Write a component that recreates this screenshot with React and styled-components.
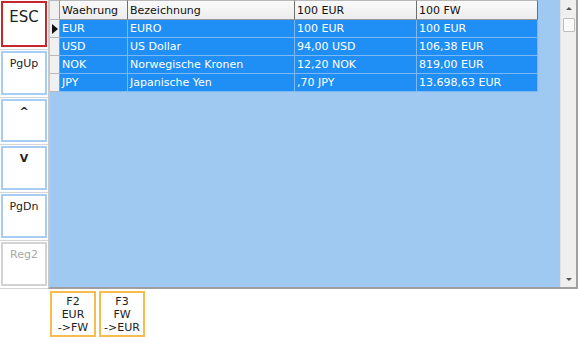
import React from 'react'
import styled, { createGlobalStyle } from 'styled-components'

const GlobalStyle = createGlobalStyle`
  html, body {
    margin: 0;
    padding: 0;
    background: #fff;
  }
  body {
    font-family: Tahoma, "DejaVu Sans", sans-serif;
    font-size: 11px;
    color: #1a1a1a;
  }
`

const Page = styled.div`
  width: 578px;
  height: 337px;
  overflow: hidden;
`

const Top = styled.div`
  display: flex;
  height: 289px;
`

const SideBar = styled.div`
  width: 49px;
  display: flex;
  flex-direction: column;
`

const SideSlot = styled.div`
  height: 48px;
  padding: 1px 1px 0 1px;
  border-bottom: 1px solid #d4d4d4;
  box-sizing: border-box;
  display: flex;
  &:first-child {
    height: 50px;
  }
`

const KeyButton = styled.div`
  flex: 1;
  margin-bottom: 2px;
  background: #fff;
  border: 2px solid ${p => (p.$tone === 'red' ? '#c8262c' : p.$tone === 'grey' ? '#d2d2d2' : '#a8cdf5')};
  color: ${p => (p.$tone === 'grey' ? '#a8a8a8' : '#222')};
  font-size: ${p => (p.$big ? '15px' : '11px')};
  font-weight: ${p => (p.$bold ? 'bold' : 'normal')};
  text-align: center;
  padding-top: ${p => (p.$big ? '5px' : '4px')};
  box-sizing: border-box;
`

const Grid = styled.div`
  flex: 1;
  display: flex;
  background: #9fc9f0;
  border-left: 2px solid #c8c8c8;
  border-right: 2px solid #a0a0a0;
  border-bottom: 2px solid #a0a0a0;
`

const Table = styled.div`
  flex: 1;
  display: flex;
  flex-direction: column;
`

const Row = styled.div`
  display: flex;
  height: ${p => (p.$head ? '20px' : '18px')};
`

const RowHead = styled.div`
  width: 9px;
  flex: none;
  background: #f0f0f0;
  border-right: 1px solid #9a9a9a;
  border-bottom: 1px solid #b8b8b8;
  border-top: ${p => (p.$head ? '1px solid #b8b8b8' : 'none')};
  display: flex;
  align-items: center;
  justify-content: center;
`

const Arrow = styled.span`
  width: 0;
  height: 0;
  border-top: 5px solid transparent;
  border-bottom: 5px solid transparent;
  border-left: 6px solid #111;
`

const HeadCell = styled.div`
  width: ${p => p.$w}px;
  flex: none;
  box-sizing: border-box;
  padding-left: 2px;
  background: linear-gradient(#fafafa, #ececec);
  border-top: 1px solid #b8b8b8;
  border-right: 1px solid #6f6f6f;
  border-bottom: 1px solid #9a9a9a;
  display: flex;
  align-items: center;
  color: #111;
  white-space: nowrap;
`

const Cell = styled.div`
  width: ${p => p.$w}px;
  flex: none;
  box-sizing: border-box;
  padding-left: 2px;
  background: #1f8ff5;
  color: #fff;
  border-right: 1px solid #7cb9f2;
  border-bottom: 1px solid #7cb9f2;
  display: flex;
  align-items: center;
  white-space: nowrap;
`

const ScrollBar = styled.div`
  width: 15px;
  margin-left: 22px;
  background: #efefef;
  border-left: 1px solid #e2e2e2;
  display: flex;
  flex-direction: column;
  align-items: center;
`

const ScrollArrow = styled.div`
  height: 16px;
  display: flex;
  align-items: center;
  justify-content: center;
  &::after {
    content: '';
    width: 0;
    height: 0;
    border-left: 3px solid transparent;
    border-right: 3px solid transparent;
    ${p => (p.$down ? 'border-top: 3px solid #555;' : 'border-bottom: 3px solid #555;')}
  }
`

const Thumb = styled.div`
  width: 10px;
  height: 12px;
  margin-top: 2px;
  background: #fbfbfb;
  border: 1px solid #bdbdbd;
  border-radius: 1px;
`

const Spacer = styled.div`
  flex: 1;
`

const Bottom = styled.div`
  display: flex;
  gap: 3px;
  padding: 2px 0 0 50px;
`

const FnButton = styled.div`
  width: 46px;
  height: 46px;
  box-sizing: border-box;
  border: 2px solid #f6bc4e;
  background: #fff;
  text-align: center;
  line-height: 13px;
  padding-top: 2px;
  color: #222;
`

const widths = [68, 167, 122, 121]
const headers = ['Waehrung', 'Bezeichnung', '100 EUR', '100 FW']
const rows = [
  ['EUR', 'EURO', '100 EUR', '100 EUR'],
  ['USD', 'US Dollar', '94,00 USD', '106,38 EUR'],
  ['NOK', 'Norwegische Kronen', '12,20 NOK', '819,00 EUR'],
  ['JPY', 'Japanische Yen', ',70 JPY', '13.698,63 EUR'],
]

const keys = [
  { label: 'ESC', tone: 'red', big: true },
  { label: 'PgUp' },
  { label: '^', bold: true },
  { label: 'V', bold: true },
  { label: 'PgDn' },
  { label: 'Reg2', tone: 'grey' },
]

export default function App() {
  return (
    <Page>
      <GlobalStyle />
      <Top>
        <SideBar>
          {keys.map(k => (
            <SideSlot key={k.label}>
              <KeyButton $tone={k.tone} $big={k.big} $bold={k.bold}>
                {k.label}
              </KeyButton>
            </SideSlot>
          ))}
        </SideBar>
        <Grid>
          <Table>
            <Row $head>
              <RowHead $head />
              {headers.map((h, i) => (
                <HeadCell key={h} $w={widths[i]}>
                  {h}
                </HeadCell>
              ))}
            </Row>
            {rows.map((r, ri) => (
              <Row key={r[0]}>
                <RowHead>{ri === 0 && <Arrow />}</RowHead>
                {r.map((c, i) => (
                  <Cell key={i} $w={widths[i]}>
                    {c}
                  </Cell>
                ))}
              </Row>
            ))}
          </Table>
          <ScrollBar>
            <ScrollArrow />
            <Thumb />
            <Spacer />
            <ScrollArrow $down />
          </ScrollBar>
        </Grid>
      </Top>
      <Bottom>
        <FnButton>
          F2
          <br />
          EUR
          <br />
          -&gt;FW
        </FnButton>
        <FnButton>
          F3
          <br />
          FW
          <br />
          -&gt;EUR
        </FnButton>
      </Bottom>
    </Page>
  )
}
